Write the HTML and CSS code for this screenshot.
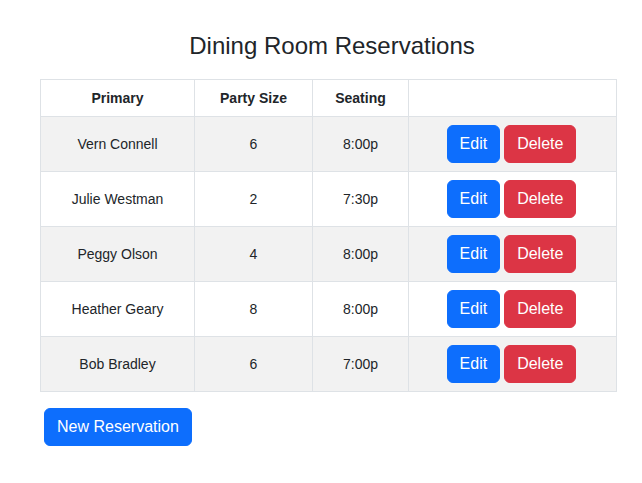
FILE: index.html
```html
<!DOCTYPE html>
<html lang="en">
<head>
<meta charset="utf-8">
<title>Dining Room Reservations</title>
<link rel="stylesheet" href="styles.css">
</head>
<body>
<main class="page">
  <h1 class="title">Dining Room Reservations</h1>
  <table class="res-table">
    <colgroup>
      <col class="c-primary">
      <col class="c-size">
      <col class="c-seat">
      <col class="c-actions">
    </colgroup>
    <thead>
      <tr><th>Primary</th><th>Party Size</th><th>Seating</th><th></th></tr>
    </thead>
    <tbody>
      <tr class="odd"><td>Vern Connell</td><td>6</td><td>8:00p</td><td><div class="actions"><button class="btn btn-primary">Edit</button><button class="btn btn-danger">Delete</button></div></td></tr>
      <tr><td>Julie Westman</td><td>2</td><td>7:30p</td><td><div class="actions"><button class="btn btn-primary">Edit</button><button class="btn btn-danger">Delete</button></div></td></tr>
      <tr class="odd"><td>Peggy Olson</td><td>4</td><td>8:00p</td><td><div class="actions"><button class="btn btn-primary">Edit</button><button class="btn btn-danger">Delete</button></div></td></tr>
      <tr><td>Heather Geary</td><td>8</td><td>8:00p</td><td><div class="actions"><button class="btn btn-primary">Edit</button><button class="btn btn-danger">Delete</button></div></td></tr>
      <tr class="odd"><td>Bob Bradley</td><td>6</td><td>7:00p</td><td><div class="actions"><button class="btn btn-primary">Edit</button><button class="btn btn-danger">Delete</button></div></td></tr>
    </tbody>
  </table>
  <button class="btn btn-primary new-btn">New Reservation</button>
</main>
</body>
</html>
```

FILE: styles.css
```css
* { box-sizing: border-box; }
html, body { margin: 0; padding: 0; background: #fff; }
body {
  font-family: "Liberation Sans", Arial, Helvetica, sans-serif;
  color: #212529;
}
.page {
  width: 576px;
  margin-left: 40px;
}
.title {
  margin: 32px 0 19px 0;
  padding-left: 8px;
  font-size: 24px;
  line-height: 28px;
  font-weight: 400;
  text-align: center;
}
.res-table {
  width: 576px;
  border-collapse: collapse;
  table-layout: fixed;
  font-size: 14px;
}
.c-primary { width: 154px; }
.c-size { width: 118px; }
.c-seat { width: 96px; }
.c-actions { width: 208px; }
.res-table th,
.res-table td {
  border: 1px solid #dee2e6;
  text-align: center;
  vertical-align: middle;
  padding: 8px;
}
.res-table th {
  font-weight: 700;
  line-height: 20px;
}
.res-table td {
  line-height: 20px;
}
.res-table tr.odd td { background: #f2f2f2; }
.actions {
  display: flex;
  justify-content: center;
  gap: 4px;
  margin-right: 2px;
}
.btn {
  font-family: inherit;
  font-size: 16px;
  line-height: 24px;
  padding: 6px 12px;
  border: 1px solid transparent;
  border-radius: 6px;
  color: #fff;
  cursor: pointer;
}
.btn-primary { background: #0d6efd; border-color: #0d6efd; }
.btn-danger { background: #dc3545; border-color: #dc3545; }
.new-btn {
  margin: 16px 0 0 4px;
}
```
